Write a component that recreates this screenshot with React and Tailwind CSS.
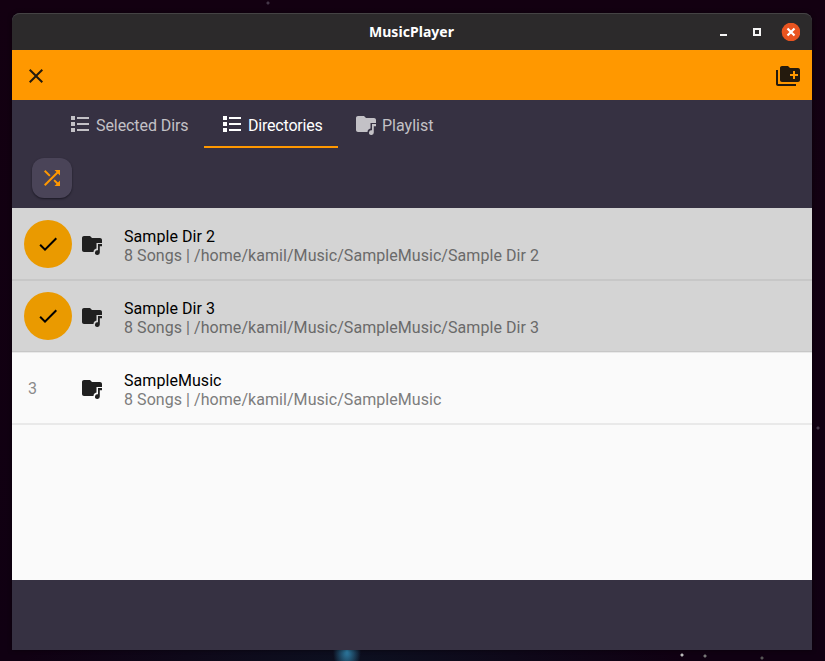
import React from 'react';

function Icon({ children, className = '' }) {
  return (
    <svg viewBox="0 0 24 24" className={`h-6 w-6 shrink-0 fill-current ${className}`}>
      {children}
    </svg>
  );
}

const ListIcon = () => (
  <Icon>
    <path d="M3 4h4v4H3zM9 5h12v2H9zM3 10h4v4H3zM9 11h12v2H9zM3 16h4v4H3zM9 17h12v2H9z" />
  </Icon>
);

const FolderMusicIcon = () => (
  <Icon>
    <path d="M4 4h6l2 2h8c1.100 0 2 .9 2 2v3h-5.500v5.600c-1.900.3-3 1.700-3 3.400H4c-1.100 0-2-.9-2-2V6c0-1.100.9-2 2-2z" />
    <path d="M18 12h4v2.200h-2.200v6.400a2.400 2.400 0 1 1-1.800-2.300z" />
  </Icon>
);

const AddFolderIcon = () => (
  <Icon>
    <path
      fillRule="evenodd"
      d="M22 4h-8l-2-2H6c-1.100 0-2 .9-2 2v12c0 1.100.9 2 2 2h16c1.100 0 2-.9 2-2V6c0-1.100-.9-2-2-2zM17 7h2v3h3v2h-3v3h-2v-3h-3v-2h3zM2 6H0v14c0 1.100.9 2 2 2h18v-2H2z"
    />
  </Icon>
);

const tabs = [
  { label: 'Selected Dirs', icon: <ListIcon />, size: 'w-[152px] tracking-[-0.08px]' },
  { label: 'Directories', icon: <ListIcon />, active: true, size: 'w-[134px] tracking-[-0.2px]' },
  { label: 'Playlist', icon: <FolderMusicIcon />, size: 'w-[112px]' },
];

const rows = [
  { name: 'Sample Dir 2', path: '/home/kamil/Music/SampleMusic/Sample Dir 2', selected: true },
  { name: 'Sample Dir 3', path: '/home/kamil/Music/SampleMusic/Sample Dir 3', selected: true },
  { name: 'SampleMusic', path: '/home/kamil/Music/SampleMusic' },
];

function TitleBar() {
  return (
    <header className="grid h-[37px] shrink-0 grid-cols-[1fr_auto_1fr] items-center rounded-t-lg border-t border-[#454344] bg-[#2c2a2b]">
      <span />
      <h1 className="pr-px font-['Noto_Sans',sans-serif] text-[14px] leading-5 font-bold tracking-[0.05px] text-white">
        MusicPlayer
      </h1>
      <div className="flex items-center justify-end pr-3">
        <svg viewBox="0 0 80 18" className="h-[18px] w-20">
          <path d="M-1 11h8v2h-8z" fill="#f5f5f5" />
          <path d="M34 6h6v6h-6z" fill="none" stroke="#f5f5f5" strokeWidth="2" />
          <circle cx="71" cy="9" r="9.300" fill="#e95420" />
          <path d="M67.500 5.500l7 7m0-7l-7 7" stroke="#fff" strokeWidth="2.200" />
        </svg>
      </div>
    </header>
  );
}

function Row({ row, index }) {
  return (
    <li
      className={`flex h-[72px] items-center border-t border-b pl-3 ${
        row.selected ? 'border-b-[#c7c7c7] bg-[#d4d4d4]' : 'border-b-[#e9e9e9] bg-[#fafafa]'
      } ${index === 0 ? 'border-t-[#d4d4d4]' : ''} ${index === 1 ? 'border-t-[#c7c7c7]' : ''} ${
        index === 2 ? 'border-t-[#e9e9e9]' : ''
      }`}
    >
      {row.selected ? (
        <span className="flex h-12 w-12 items-center justify-center rounded-full bg-[#ea9a00] text-black">
          <Icon>
            <path d="M9 16.170L4.830 12l-1.420 1.410L9 19 21 7l-1.410-1.410z" />
          </Icon>
        </span>
      ) : (
        <span className="w-12 pt-0.5 pl-1 text-[#8a8a8a]">{index + 1}</span>
      )}
      <span className="ml-2 text-[#202020]">
        <FolderMusicIcon />
      </span>
      <div className="ml-5 pt-1 leading-[19px] tracking-[0.055px]">
        <p className="text-black">{row.name}</p>
        <p className={row.selected ? 'text-[#6a6a6a]' : 'text-[#7d7d7d]'}>8 Songs | {row.path}</p>
      </div>
    </li>
  );
}

export default function App() {
  return (
    <div className="h-[661px] w-[825px] overflow-hidden bg-[radial-gradient(ellipse_14px_24px_at_347px_651px,#2f80a8,transparent),radial-gradient(circle_at_682px_655px,#bbb_0_1px,transparent_2px),radial-gradient(circle_at_705px_656px,#777_0_1px,transparent_2px),radial-gradient(circle_at_762px_658px,#555_0_1px,transparent_2px),radial-gradient(circle_at_818px_428px,#443748_0_1px,transparent_2px),radial-gradient(circle_at_268px_3px,#443748_0_1px,transparent_2px),radial-gradient(ellipse_330px_50px_at_350px_661px,#0c1020,transparent),linear-gradient(#130011,#100012)] px-3 pt-[13px] font-[Roboto,sans-serif] text-base">
      <main className="flex h-[637px] w-[800px] flex-col rounded-t-lg bg-[#363142] shadow-[0_0_4px_#00000080]">
        <TitleBar />
        <div className="flex h-[50px] shrink-0 items-center justify-between bg-[#ff9800] px-3 pt-0.5 text-[#241a0d]">
          <Icon>
            <path d="M19 6.410L17.590 5 12 10.590 6.410 5 5 6.410 10.590 12 5 17.590 6.410 19 12 13.410 17.590 19 19 17.590 13.410 12z" />
          </Icon>
          <AddFolderIcon />
        </div>
        <nav className="flex h-12 shrink-0 pl-10">
          {tabs.map((tab) => (
            <div
              key={tab.label}
              className={`flex items-center gap-1 border-b-2 pt-0.5 pl-4 whitespace-nowrap ${tab.size} ${
                tab.active ? 'border-[#ff9800] text-white' : 'border-transparent text-[#c3c1c6]'
              }`}
            >
              {tab.icon}
              <span className="pt-[3px]">{tab.label}</span>
            </div>
          ))}
        </nav>
        <div className="h-[60px] shrink-0 px-5 pt-2.5">
          <button className="flex h-10 w-10 items-center justify-center rounded-xl bg-[#4a4458] text-[#ff9800] shadow-[0_1px_2px_#1c1925]">
            <Icon>
              <path d="M10.590 9.170L5.410 4 4 5.410l5.170 5.170 1.420-1.410zM14.500 4l2.040 2.040L4 18.590 5.410 20 17.960 7.460 20 9.500V4h-5.500zm.33 9.410l-1.410 1.410 3.130 3.130L14.500 20H20v-5.500l-2.040 2.040-3.130-3.130z" />
            </Icon>
          </button>
        </div>
        <ul className="h-[372px] shrink-0 bg-[#fafafa]">
          {rows.map((row, i) => (
            <Row key={row.name} row={row} index={i} />
          ))}
          <li className="h-px bg-[#e9e9e9]" />
        </ul>
      </main>
    </div>
  );
}
